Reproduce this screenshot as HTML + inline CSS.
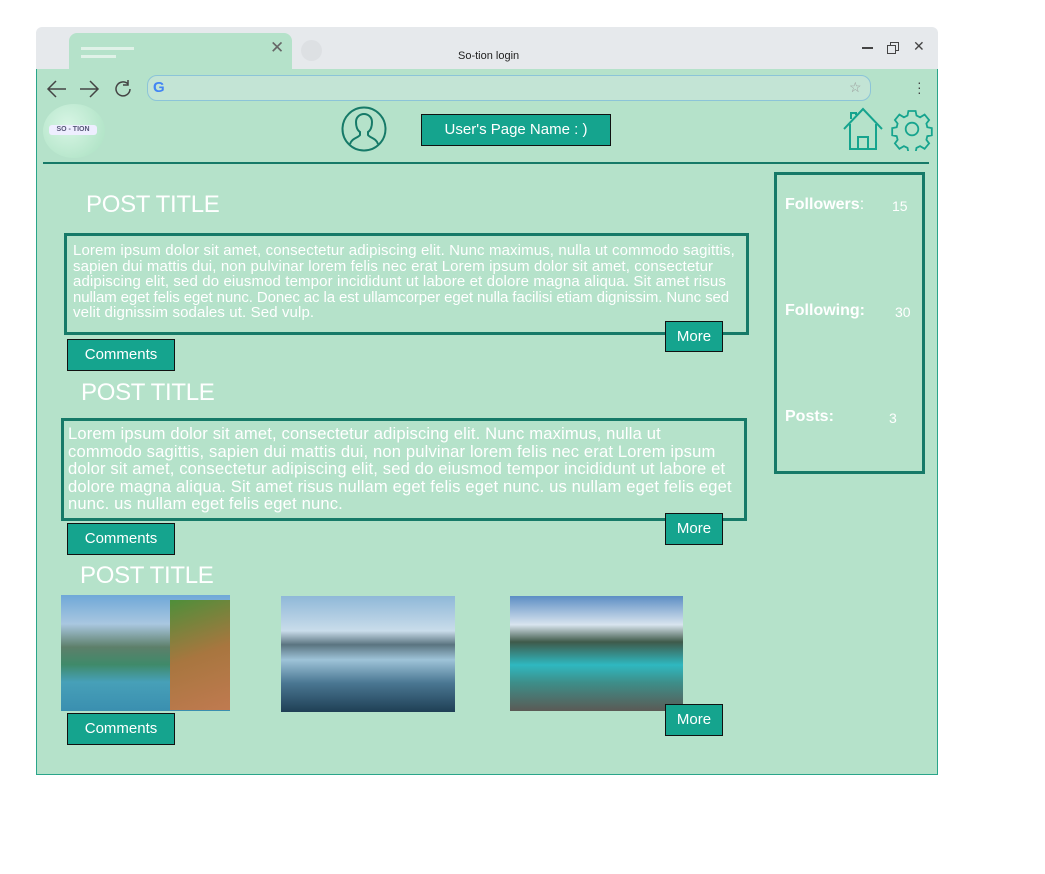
<!DOCTYPE html>
<html><head><meta charset="utf-8"><style>
*{margin:0;padding:0;box-sizing:border-box}
body{width:1045px;height:874px;background:#fff;position:relative;font-family:"Liberation Sans",sans-serif;overflow:hidden}
.a{position:absolute}
.win{left:36px;top:69px;width:902px;height:706px;background:#b5e2ca;border:1px solid #2aa58a;border-top:none}
.top{left:36px;top:27px;width:902px;height:42px;background:#e6e9ec;border-radius:6px 6px 0 0}
.tab{left:69px;top:33px;width:223px;height:38px;background:#b5e2ca;border-radius:8px 8px 0 0}
.btn{background:#15a48e;border:1px solid #111;color:#fff;font-size:15px;text-align:center}
.w{color:#fff}
.box{border:3px solid #167a68}
.txt{color:#fff;font-size:15px;line-height:15.5px;letter-spacing:0.12px;white-space:nowrap}
.title{color:#fff;font-size:24px;letter-spacing:-0.3px}
</style></head><body>
<div class="a top"></div>
<div class="a win"></div>
<div class="a tab"></div>
<div class="a" style="left:81px;top:47px;width:53px;height:3px;background:#e0f2e8"></div>
<div class="a" style="left:81px;top:55px;width:35px;height:3px;background:#e0f2e8"></div>
<div class="a" style="left:270px;top:38px;color:#666;font-size:17px">✕</div>
<div class="a" style="left:301px;top:40px;width:21px;height:21px;border-radius:50%;background:#dde0e3"></div>
<div class="a" style="left:458px;top:50px;font-size:11px;color:#222">So-tion login</div>
<div class="a" style="left:862px;top:47px;width:11px;height:1.5px;background:#444"></div>
<div class="a" style="left:890px;top:42px;width:9px;height:9px;border:1px solid #444"></div>
<div class="a" style="left:887px;top:45px;width:9px;height:9px;border:1px solid #444;background:#e6e9ec"></div>
<div class="a" style="left:913px;top:38px;font-size:14px;color:#444">✕</div>
<svg class="a" style="left:46px;top:78px" width="90" height="22" viewBox="0 0 90 22"><g fill="none" stroke="#444" stroke-width="1.5"><path d="M2 11h18M10 3l-8 8 8 8"/><path d="M34 11h18M44 3l8 8-8 8"/><path d="M82 6a7 7 0 1 0 2 5M82 2v5h-5"/></g></svg>
<div class="a" style="left:147px;top:75px;width:724px;height:26px;border-radius:10px;background:#c3e4d5;border:1px solid #8cc4d8"></div>
<div class="a" style="left:153px;top:79px;font-size:15px;font-weight:bold;color:#4285f4">G</div>
<div class="a" style="left:849px;top:79px;font-size:14px;color:#999">☆</div>
<div class="a" style="left:917px;top:80px;font-size:14px;color:#444;line-height:5px">·<br>·<br>·</div>
<div class="a" style="left:43px;top:104px;width:62px;height:54px;border-radius:50%;background:radial-gradient(circle at 40% 40%,#d8f5e5,#a8e0c0)"></div>
<div class="a" style="left:49px;top:125px;width:48px;height:10px;background:#eef;border-radius:3px;font-size:7px;font-weight:bold;color:#557;text-align:center;line-height:10px">SO - TION</div>
<svg class="a" style="left:341px;top:106px" width="46" height="46" viewBox="0 0 46 46"><g fill="none" stroke="#167a68" stroke-width="2"><circle cx="23" cy="23" r="21.5"/><path d="M9 38c2-6 8-6 10-9v-3c-3-2-4-6-4-10 0-5 4-8 8-8s8 3 8 8c0 4-1 8-4 10v3c2 3 8 3 10 9"/></g></svg>
<div class="a btn" style="left:421px;top:114px;width:190px;height:32px;line-height:30px">User's Page Name : )</div>
<svg class="a" style="left:842px;top:107px" width="92" height="44" viewBox="0 0 92 44"><g fill="none" stroke="#16a48e" stroke-width="2"><path d="M2 22L21 2l19 20M8 17v25h26V17M16 42V30h10v12M9 12V6h5v2"/><g transform="translate(70 22) scale(0.9) translate(-70 -22)"><circle cx="70" cy="22" r="7"/><path d="M66 2h8l1 5 4 2 5-3 5 6-3 4 1 4 5 1v8l-5 1-1 4 3 4-5 6-5-3-4 2-1 5h-8l-1-5-4-2-5 3-5-6 3-4-1-4-5-1v-8l5-1 1-4-3-4 5-6 5 3 4-2z"/></g></g></svg>
<div class="a" style="left:43px;top:162px;width:886px;height:2px;background:#167a68"></div>

<div class="a title" style="left:86px;top:191px">POST TITLE</div>
<div class="a box" style="left:64px;top:233px;width:685px;height:102px"></div>
<div class="a txt" style="left:73px;top:243px">Lorem ipsum dolor sit amet, consectetur adipiscing elit. Nunc maximus, nulla ut commodo sagittis,<br>sapien dui mattis dui, non pulvinar lorem felis nec erat Lorem ipsum dolor sit amet, consectetur<br>adipiscing elit, sed do eiusmod tempor incididunt ut labore et dolore magna aliqua. Sit amet risus<br><span style="letter-spacing:-0.1px">nullam eget felis eget nunc. Donec ac la est ullamcorper eget nulla facilisi etiam dignissim. Nunc sed</span><br>velit dignissim sodales ut. Sed vulp.</div>
<div class="a btn" style="left:665px;top:321px;width:58px;height:31px;line-height:29px">More</div>
<div class="a btn" style="left:67px;top:339px;width:108px;height:32px;line-height:30px">Comments</div>

<div class="a title" style="left:81px;top:379px">POST TITLE</div>
<div class="a box" style="left:61px;top:418px;width:686px;height:103px"></div>
<div class="a txt" style="left:68px;top:425px;font-size:16.6px;line-height:17.5px;letter-spacing:0.15px">Lorem ipsum dolor sit amet, consectetur adipiscing elit. Nunc maximus, nulla ut<br>commodo sagittis, sapien dui mattis dui, non pulvinar lorem felis nec erat Lorem ipsum<br>dolor sit amet, consectetur adipiscing elit, sed do eiusmod tempor incididunt ut labore et<br>dolore magna aliqua. Sit amet risus nullam eget felis eget nunc. us nullam eget felis eget<br>nunc. us nullam eget felis eget nunc.</div>
<div class="a btn" style="left:665px;top:513px;width:58px;height:32px;line-height:30px">More</div>
<div class="a btn" style="left:67px;top:523px;width:108px;height:32px;line-height:30px">Comments</div>

<div class="a title" style="left:80px;top:562px">POST TITLE</div>
<div class="a" style="left:61px;top:595px;width:169px;height:116px;background:linear-gradient(180deg,#6fa8d8 0%,#a9c7e0 25%,#5d7f6a 45%,#3f8a6a 60%,#47a0b8 75%,#3a8fb0 100%)"></div>
<div class="a" style="left:170px;top:600px;width:60px;height:110px;background:linear-gradient(160deg,#4e8f3a,#a8763f 50%,#c07a50)"></div>
<div class="a" style="left:281px;top:596px;width:174px;height:116px;background:linear-gradient(180deg,#8fb8d8 0%,#c9dcea 30%,#5a7480 42%,#9ec3d8 55%,#4a7792 75%,#1f3f55 100%)"></div>
<div class="a" style="left:510px;top:596px;width:173px;height:115px;background:linear-gradient(180deg,#5c8ec4 0%,#d8e4ee 25%,#3f5a4a 40%,#2fb8c0 60%,#3d8f8a 75%,#5a5a55 100%)"></div>
<div class="a btn" style="left:665px;top:704px;width:58px;height:32px;line-height:30px">More</div>
<div class="a btn" style="left:67px;top:713px;width:108px;height:32px;line-height:30px">Comments</div>

<div class="a box" style="left:774px;top:172px;width:151px;height:302px"></div>
<div class="a w" style="left:785px;top:196px;font-size:16px;font-weight:bold">Followers<span style="font-weight:normal">:</span></div>
<div class="a w" style="left:892px;top:198px;font-size:14px">15</div>
<div class="a w" style="left:785px;top:302px;font-size:16px;font-weight:bold">Following:</div>
<div class="a w" style="left:895px;top:304px;font-size:14px">30</div>
<div class="a w" style="left:785px;top:408px;font-size:16px;font-weight:bold">Posts:</div>
<div class="a w" style="left:889px;top:410px;font-size:14px">3</div>
</body></html>
